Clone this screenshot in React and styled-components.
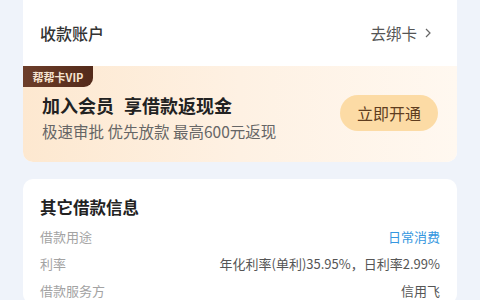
import React from "react";
import styled, { createGlobalStyle } from "styled-components";

const GlobalStyle = createGlobalStyle`
  html, body {
    margin: 0;
    padding: 0;
    background: #eff3fa;
  }
  body {
    font-family: "Noto Sans CJK SC", "Noto Sans", sans-serif;
    width: 480px;
    height: 300px;
    overflow: hidden;
  }
`;

const Page = styled.div`
  display: flex;
  flex-direction: column;
  gap: 17px;
  padding: 0 23px;
`;

const Card = styled.div`
  background: #fff;
  border-radius: 10px;
  overflow: hidden;
  margin-top: ${({ $top }) => $top || "0"};
`;

const AccountRow = styled.div`
  display: flex;
  align-items: center;
  justify-content: space-between;
  padding: 12px 17px 0;
  box-sizing: border-box;
  height: 78px;
`;

const Label = styled.span`
  font-size: 16px;
  color: #333;
  font-weight: 500;
`;

const Link = styled.span`
  display: flex;
  align-items: center;
  gap: 8px;
  font-size: 15.5px;
  color: #555;
  padding-right: 9px;
`;

const Vip = styled.div`
  background: linear-gradient(90deg, #fde8d0 0%, #fef1e3 50%, #fff8f0 100%);
  height: 96px;
  display: flex;
  flex-direction: column;
`;

const Badge = styled.div`
  align-self: flex-start;
  height: 21px;
  width: 70px;
  display: flex;
  align-items: center;
  justify-content: center;
  background: linear-gradient(90deg, #6d3e2a, #532a1a);
  color: #f6e3cf;
  font-size: 11px;
  font-weight: 700;
  border-radius: 0 0 9px 0;
`;

const VipBody = styled.div`
  flex: 1;
  display: flex;
  align-items: center;
  justify-content: space-between;
  padding: 0 19px 12px 19px;
`;

const VipText = styled.div`
  display: flex;
  flex-direction: column;
  gap: 4px;
  margin-top: -4px;
`;

const Title = styled.div`
  display: flex;
  gap: 10px;
  font-size: 18px;
  font-weight: 700;
  color: #222;
  line-height: 24px;
`;

const Sub = styled.div`
  font-size: 15.5px;
  color: #666;
  line-height: 20px;
`;

const OpenButton = styled.div`
  width: 98px;
  height: 36px;
  border-radius: 18px;
  background: #fcdba5;
  color: #5f3d1f;
  font-size: 16px;
  display: flex;
  align-items: center;
  justify-content: center;
  margin-top: -12px;
`;

const InfoCard = styled(Card)`
  padding: 16px 17px 0;
`;

const InfoTitle = styled.div`
  font-size: 16.5px;
  font-weight: 700;
  color: #222;
  line-height: 24px;
  margin-bottom: 4px;
`;

const Row = styled.div`
  display: flex;
  justify-content: space-between;
  align-items: center;
  height: 27px;
  font-size: 13px;
`;

const Key = styled.span`
  color: #a3a3a3;
`;

const Value = styled.span`
  color: ${({ $blue }) => ($blue ? "#3597e0" : "#555")};
`;

const rows = [
  ["借款用途", "日常消费", true],
  ["利率", "年化利率(单利)35.95%，日利率2.99%"],
  ["借款服务方", "信用飞"],
];

export default function App() {
  return (
    <>
      <GlobalStyle />
      <Page>
        <Card $top="-12px">
          <AccountRow>
            <Label>收款账户</Label>
            <Link>
              去绑卡
              <svg width="6" height="10" viewBox="0 0 6 10">
                <path d="M1 1 L5 5 L1 9" fill="none" stroke="#666" strokeWidth="1.2" />
              </svg>
            </Link>
          </AccountRow>
          <Vip>
            <Badge>帮帮卡VIP</Badge>
            <VipBody>
              <VipText>
                <Title>
                  <span>加入会员</span>
                  <span>享借款返现金</span>
                </Title>
                <Sub>极速审批 优先放款 最高600元返现</Sub>
              </VipText>
              <OpenButton>立即开通</OpenButton>
            </VipBody>
          </Vip>
        </Card>
        <InfoCard>
          <InfoTitle>其它借款信息</InfoTitle>
          {rows.map(([k, v, blue]) => (
            <Row key={k}>
              <Key>{k}</Key>
              <Value $blue={blue}>{v}</Value>
            </Row>
          ))}
        </InfoCard>
      </Page>
    </>
  );
}
